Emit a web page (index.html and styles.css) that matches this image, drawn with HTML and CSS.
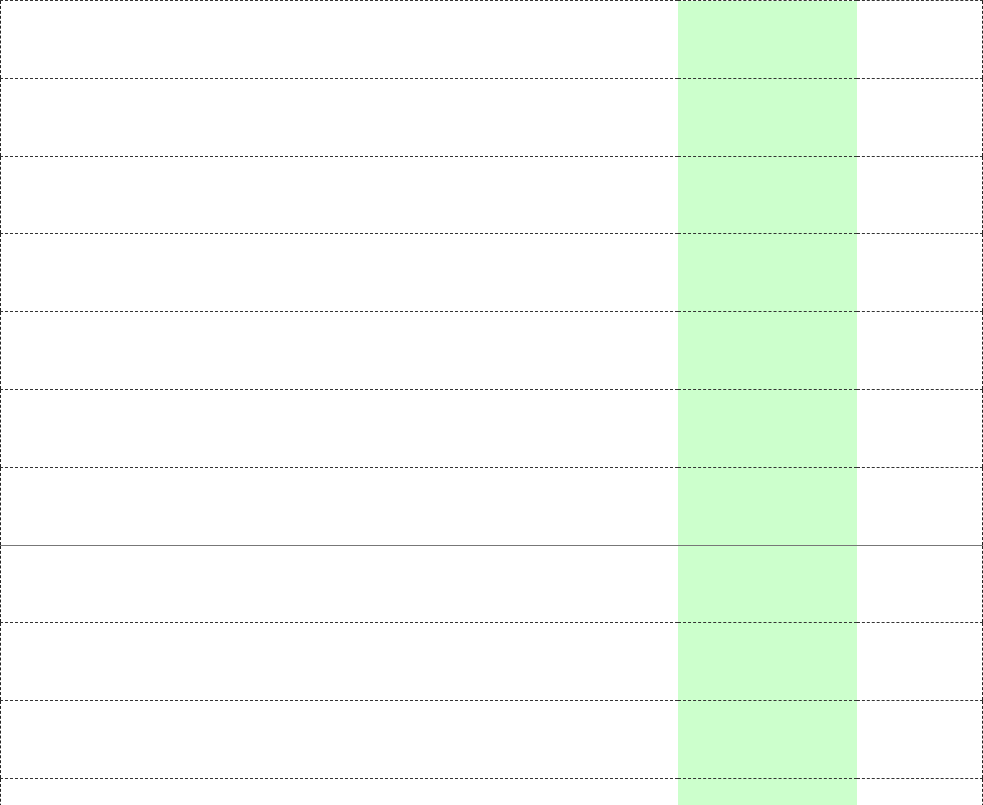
FILE: index.html
```html
<!DOCTYPE html>
<html>
<head>
<meta charset="utf-8">
<link rel="stylesheet" href="styles.css">
</head>
<body>
<table class="grid">
  <colgroup>
    <col class="c-main">
    <col class="c-green">
    <col class="c-end">
  </colgroup>
  <tbody>
    <tr><td></td><td></td><td></td></tr>
    <tr><td></td><td></td><td></td></tr>
    <tr><td></td><td></td><td></td></tr>
    <tr><td></td><td></td><td></td></tr>
    <tr><td></td><td></td><td></td></tr>
    <tr><td></td><td></td><td></td></tr>
    <tr><td></td><td></td><td></td></tr>
    <tr class="solid"><td></td><td></td><td></td></tr>
    <tr><td></td><td></td><td></td></tr>
    <tr><td></td><td></td><td></td></tr>
    <tr><td></td><td></td><td></td></tr>
    <tr><td></td><td></td><td></td></tr>
  </tbody>
</table>
</body>
</html>
```
FILE: styles.css
```css
html, body {
  margin: 0;
  padding: 0;
  background: #fff;
  font-family: "Liberation Sans", Arial, sans-serif;
}
.grid {
  width: 983px;
  border-collapse: collapse;
  border: 1px dashed #222;
  table-layout: fixed;
}
.c-main { width: 677px; }
.c-green { width: 179px; background: #ccffcc; }
.c-end { width: auto; }
.grid td {
  height: 76.8px;
  padding: 0;
  border-top: 1px dashed #333;
  border-bottom: 1px dashed #333;
}
.grid .solid td {
  border-top: 1px solid #777;
}
```
